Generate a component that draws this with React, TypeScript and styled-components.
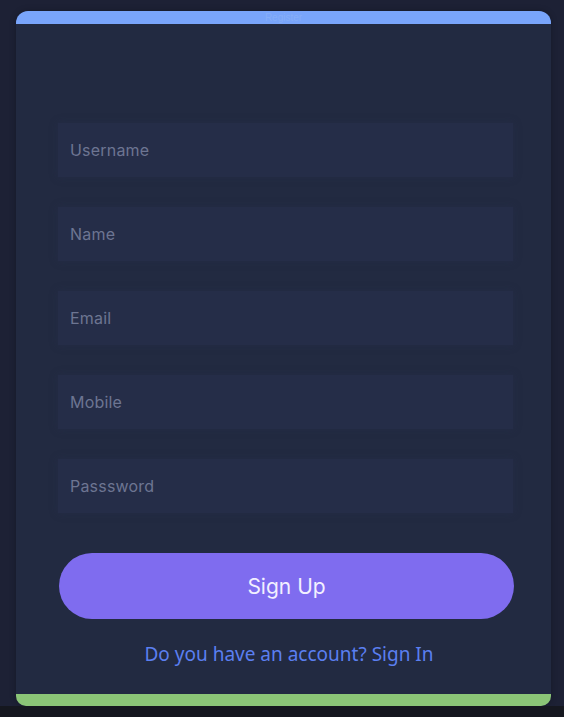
import React from "react";
import styled, { createGlobalStyle } from "styled-components";

const Global = createGlobalStyle`
  html, body { margin: 0; padding: 0; background: #1d2135; }
  * { box-sizing: border-box; }
`;

const Page = styled.div`
  width: 564px;
  height: 717px;
  display: flex;
  flex-direction: column;
  background: #1d2135;
  overflow: hidden;
`;

const Stage = styled.div`
  height: 706px;
  padding: 11px 13px 0 16px;
  display: flex;
`;

const Taskbar = styled.div`
  flex: 1;
  background: #15171f;
`;

const Card = styled.div`
  flex: 1;
  display: flex;
  flex-direction: column;
  background: #222a41;
  border-radius: 12px 12px 10px 10px;
  overflow: hidden;
  box-shadow: 0 0 6px rgba(0, 0, 0, 0.25);
`;

const TopBar = styled.div`
  height: 13px;
  background: #79a5fb;
  display: flex;
  justify-content: center;
  align-items: center;
  font-family: "Liberation Sans", Arial, sans-serif;
  font-size: 10px;
  color: #86aef8;
`;

const BottomBar = styled.div`
  height: 12px;
  background: #8bc577;
`;

const Body = styled.form`
  flex: 1;
  display: flex;
  flex-direction: column;
  padding: 99px 37px 0 42px;
`;

const Fields = styled.div`
  display: flex;
  flex-direction: column;
  gap: 30px;
`;

const Input = styled.input`
  height: 54px;
  width: 455px;
  border: none;
  outline: none;
  background: #252d48;
  box-shadow: 0 0 8px rgba(40, 50, 80, 0.35);
  padding: 0 12px;
  font-family: Inter, "Liberation Sans", sans-serif;
  font-size: 16px;
  letter-spacing: 0.2px;
  color: #c8cce0;
  &::placeholder {
    color: #6d7592;
  }
`;

const Button = styled.button`
  margin-top: 40px;
  width: 455px;
  height: 66px;
  margin-left: 1px;
  border: none;
  border-radius: 33px;
  background: #7f6cef;
  color: #f2f0ff;
  font-family: Inter, "Liberation Sans", sans-serif;
  font-size: 21px;
  cursor: pointer;
`;

const Footer = styled.p`
  margin: 22px 0 0;
  text-align: center;
  font-family: "Noto Sans", "Open Sans", sans-serif;
  font-size: 19px;
  color: #5b7ff0;
  padding-left: 6px;
`;

const LinkText = styled.a`
  color: inherit;
  text-decoration: none;
`;

export default function App() {
  return (
    <Page>
      <Global />
      <Stage>
        <Card>
          <TopBar>Register</TopBar>
          <Body onSubmit={(e) => e.preventDefault()}>
            <Fields>
              <Input placeholder="Username" />
              <Input placeholder="Name" />
              <Input placeholder="Email" />
              <Input placeholder="Mobile" />
              <Input placeholder="Passsword" type="password" />
            </Fields>
            <Button type="submit">Sign Up</Button>
            <Footer>
              Do you have an account? <LinkText href="#">Sign In</LinkText>
            </Footer>
          </Body>
          <BottomBar />
        </Card>
      </Stage>
      <Taskbar />
    </Page>
  );
}
